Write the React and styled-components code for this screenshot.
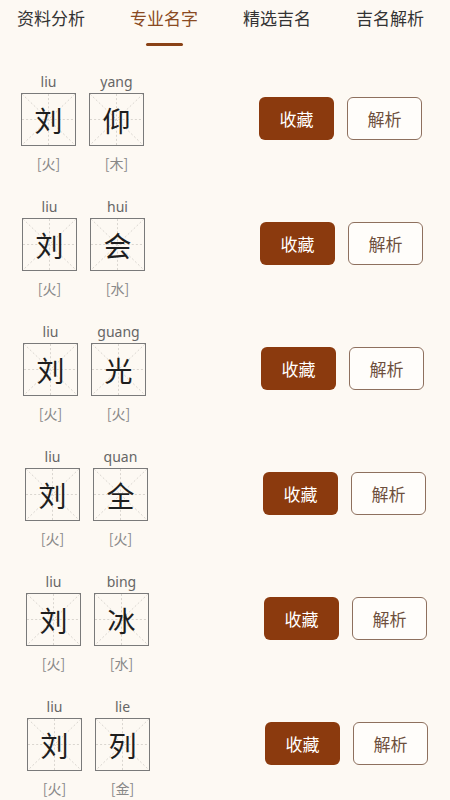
import React from 'react';
import styled, {createGlobalStyle} from 'styled-components';

const GlobalStyle = createGlobalStyle`
  html, body {
    margin: 0;
    padding: 0;
    background: #fdf9f3;
  }
  body {
    font-family: "Noto Sans", "Noto Sans CJK SC", sans-serif;
  }
`;

const Page = styled.div`
  width: 450px;
  min-height: 800px;
  background: #fdf9f3;
`;

const Tabs = styled.nav`
  display: flex;
  justify-content: space-between;
  padding: 6px 26px 0 17px;
  height: 56px;
  box-sizing: border-box;
`;

const Tab = styled.div`
  display: flex;
  flex-direction: column;
  align-items: center;
  font-family: "Noto Sans CJK SC", sans-serif;
  font-size: 17px;
  line-height: 24px;
  color: ${p => (p.active ? '#8a4a22' : '#333333')};

  &::after {
    content: '';
    margin-top: 13px;
    width: 37px;
    height: 3px;
    border-radius: 2px;
    background: ${p => (p.active ? '#8a4216' : 'transparent')};
  }
`;

const List = styled.div`
  display: flex;
  flex-direction: column;
  gap: 26px;
  padding-top: 17px;
`;

const Row = styled.div`
  display: flex;
  align-items: center;
  justify-content: space-between;
  padding: 0 ${p => 28 - p.shift}px 0 ${p => 21 + p.shift}px;
`;

const Names = styled.div`
  display: flex;
  gap: 13px;
`;

const CharCol = styled.div`
  display: flex;
  flex-direction: column;
  align-items: center;
  width: 55px;
`;

const Pinyin = styled.div`
  font-size: 14px;
  line-height: 18px;
  color: #666666;
  margin-bottom: 2px;
`;

const CharBox = styled.div`
  position: relative;
  width: 55px;
  height: 53px;
  box-sizing: border-box;
  border: 1.5px solid #7a7a7a;
  display: flex;
  align-items: center;
  justify-content: center;
  font-family: "Noto Sans CJK SC", sans-serif;
  font-size: 28px;
  color: #1e1e1e;

  svg {
    position: absolute;
    inset: 0;
    width: 100%;
    height: 100%;
  }

  span {
    position: relative;
  }
`;

const Element = styled.div`
  margin-top: 8px;
  font-family: "Noto Sans CJK SC", sans-serif;
  font-size: 14px;
  line-height: 18px;
  color: #888888;
`;

const Actions = styled.div`
  display: flex;
  gap: 13px;
  margin-top: -8px;
`;

const Button = styled.button`
  width: 75px;
  height: 43px;
  box-sizing: border-box;
  border-radius: 6px;
  font-family: "Noto Sans CJK SC", sans-serif;
  font-size: 17px;
  cursor: pointer;
  border: ${p => (p.primary ? 'none' : '1.5px solid #8e705e')};
  background: ${p => (p.primary ? '#8b3a0e' : '#fffdfa')};
  color: ${p => (p.primary ? '#ffffff' : '#6e4f3d')};
`;

const Guides = () => (
  <svg viewBox="0 0 52 50" preserveAspectRatio="none">
    <g stroke="#d2cec8" strokeWidth="0.8" strokeDasharray="2 2" fill="none">
      <line x1="0" y1="0" x2="52" y2="50" />
      <line x1="52" y1="0" x2="0" y2="50" />
      <line x1="26" y1="0" x2="26" y2="50" />
      <line x1="0" y1="25" x2="52" y2="25" />
    </g>
  </svg>
);

const NameChar = ({pinyin, char, element}) => (
  <CharCol>
    <Pinyin>{pinyin}</Pinyin>
    <CharBox>
      <Guides />
      <span>{char}</span>
    </CharBox>
    <Element>[{element}]</Element>
  </CharCol>
);

const names = [
  [['liu', '刘', '火'], ['yang', '仰', '木']],
  [['liu', '刘', '火'], ['hui', '会', '水']],
  [['liu', '刘', '火'], ['guang', '光', '火']],
  [['liu', '刘', '火'], ['quan', '全', '火']],
  [['liu', '刘', '火'], ['bing', '冰', '水']],
  [['liu', '刘', '火'], ['lie', '列', '金']],
];

const tabs = ['资料分析', '专业名字', '精选吉名', '吉名解析'];

export default function App() {
  return (
    <Page>
      <GlobalStyle />
      <Tabs>
        {tabs.map((t, i) => (
          <Tab key={t} active={i === 1}>{t}</Tab>
        ))}
      </Tabs>
      <List>
        {names.map((chars, i) => (
          <Row key={i} shift={Math.round(i * 1.2)}>
            <Names>
              {chars.map(([py, ch, el], j) => (
                <NameChar key={j} pinyin={py} char={ch} element={el} />
              ))}
            </Names>
            <Actions>
              <Button primary>收藏</Button>
              <Button>解析</Button>
            </Actions>
          </Row>
        ))}
      </List>
    </Page>
  );
}
